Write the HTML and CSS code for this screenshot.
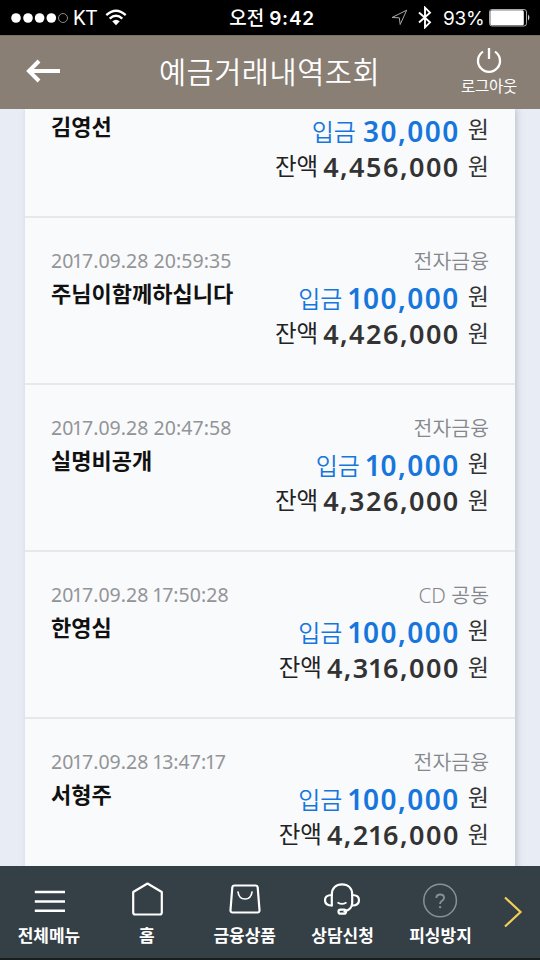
FILE: index.html
```
<!DOCTYPE html>
<html lang="ko">
<head>
<meta charset="utf-8">
<title>예금거래내역조회</title>
<link rel="stylesheet" href="styles.css">
</head>
<body>
<div class="status">
  <div class="carrier">
    <svg width="58" height="12" viewBox="0 0 58 12"><g fill="#fff"><circle cx="5" cy="6" r="4.8"/><circle cx="17" cy="6" r="4.8"/><circle cx="28.6" cy="6" r="4.8"/><circle cx="40.3" cy="6" r="4.8"/></g><circle cx="52" cy="6" r="4.5" fill="none" stroke="#aaa" stroke-width=".8"/></svg>
    <span class="kt">KT</span>
    <svg class="wifi" width="22" height="17" viewBox="0 0 22 17"><g fill="none" stroke="#fff" stroke-width="2.4"><path d="M1.3 6.2Q11-2.600 20.700 6.200"/><path d="M4.700 9.700Q11 4 17.300 9.700"/></g><path d="M7.200 12.300Q11 9 14.800 12.300L11 16.200Z" fill="#fff"/></svg>
  </div>
  <div class="clock"><span>오전</span> <b>9:42</b></div>
  <div class="power">
    <svg width="17" height="17" viewBox="0 0 17 17"><path d="M1 8.500L15.700 1.200L9.200 15.500L8.300 8.800Z" fill="none" stroke="#aaa" stroke-width="1"/></svg>
    <svg class="bt" width="14" height="23" viewBox="0 0 14 23"><path d="M1 6.500L12 16.300L7 21.300V1.700L12 6.700L1 16.500" fill="none" stroke="#fff" stroke-width="1.900"/></svg>
    <span class="percent">93%</span>
    <svg width="42" height="18" viewBox="0 0 42 18"><rect x=".5" y=".5" width="37" height="16.500" rx="2.500" fill="none" stroke="#aaa"/><rect x="1.300" y="1.300" width="33.500" height="15" rx="1.500" fill="#fff"/><path d="M39.200 5.500Q41.500 8.500 39.200 11.700Z" fill="#fff"/></svg>
  </div>
</div>
<header class="header">
  <svg class="back" width="35" height="24" viewBox="0 0 35 24"><path d="M34 12H3M13 2L3 12L13 22" fill="none" stroke="#fff" stroke-width="4"/></svg>
  <h1>예금거래내역조회</h1>
  <div class="logout">
    <svg width="26" height="26" viewBox="0 0 26 26"><path d="M7 4.600A11 11 0 1 0 19 4.600M13 1V12" fill="none" stroke="#fff" stroke-width="2.300"/></svg>
    <span>로그아웃</span>
  </div>
</header>
<main class="main">
  <div class="list">
    <section class="row first">
      <div class="who"><div class="name">김영선</div></div>
      <div class="money">
        <div class="amt in"><span class="label">입금</span><span class="num">30,000</span><span class="won">원</span></div>
        <div class="amt"><span class="label">잔액</span><span class="num">4,456,000</span><span class="won">원</span></div></div>
    </section>
    <section class="row">
      <div class="who"><div class="date">20<i>1</i>7.09.28 20:59:35</div><div class="name">주님이함께하십니다</div></div>
      <div class="money"><div class="type">전자금융</div>
        <div class="amt in"><span class="label">입금</span><span class="num"><i>1</i>00,000</span><span class="won">원</span></div>
        <div class="amt"><span class="label">잔액</span><span class="num">4,426,000</span><span class="won">원</span></div></div>
    </section>
    <section class="row">
      <div class="who"><div class="date">20<i>1</i>7.09.28 20:47:58</div><div class="name">실명비공개</div></div>
      <div class="money"><div class="type">전자금융</div>
        <div class="amt in"><span class="label">입금</span><span class="num"><i>1</i>0,000</span><span class="won">원</span></div>
        <div class="amt"><span class="label">잔액</span><span class="num">4,326,000</span><span class="won">원</span></div></div>
    </section>
    <section class="row">
      <div class="who"><div class="date">20<i>1</i>7.09.28 <i>1</i>7:50:28</div><div class="name">한영심</div></div>
      <div class="money"><div class="type">CD 공동</div>
        <div class="amt in"><span class="label">입금</span><span class="num"><i>1</i>00,000</span><span class="won">원</span></div>
        <div class="amt"><span class="label">잔액</span><span class="num">4,3<i>1</i>6,000</span><span class="won">원</span></div></div>
    </section>
    <section class="row">
      <div class="who"><div class="date">20<i>1</i>7.09.28 <i>1</i>3:47:<i>1</i>7</div><div class="name">서형주</div></div>
      <div class="money"><div class="type">전자금융</div>
        <div class="amt in"><span class="label">입금</span><span class="num"><i>1</i>00,000</span><span class="won">원</span></div>
        <div class="amt"><span class="label">잔액</span><span class="num">4,2<i>1</i>6,000</span><span class="won">원</span></div></div>
    </section>
  </div>
</main>
<nav class="tabs">
  <div class="tab"><svg width="38" height="38" viewBox="0 0 38 38"><path d="M4.800 11H35M4.800 20.500H35M4.800 29.700H35" stroke="#fff" stroke-width="2.400"/></svg><span>전체메뉴</span></div>
  <div class="tab"><svg width="38" height="38" viewBox="0 0 38 38"><path d="M19.500 2.500L33.800 11V31.500Q33.800 33.500 31.800 33.500H7.200Q5.200 33.500 5.200 31.500V11Z" fill="none" stroke="#fff" stroke-width="2.200" stroke-linejoin="round"/></svg><span>홈</span></div>
  <div class="tab"><svg width="38" height="38" viewBox="0 0 38 38"><g fill="none" stroke="#fff" stroke-linecap="round"><path d="M8.500 4.500H29.500Q31.500 4.500 31.700 6.500L33.500 29Q33.700 31.500 31.300 31.500H6.700Q4.300 31.500 4.500 29L6.300 6.500Q6.500 4.500 8.500 4.500Z" stroke-width="2.200"/><path d="M12 11Q13 18 19 18T26 11" stroke-width="1.700"/></g></svg><span>금융상품</span></div>
  <div class="tab"><svg width="38" height="38" viewBox="0 0 38 38"><g fill="none" stroke="#fff" stroke-width="2.200" stroke-linecap="round" transform="translate(-1)"><path d="M8.800 24.500V13.500C8.800 7 13 3.300 19 3.300S29.200 7 29.200 13.500V22Q29 28.500 21.500 30.500"/><path d="M8.800 14Q2 14 2 19.200T8.800 24.500M29.200 14Q36 14 36 19.200T29.200 24.500"/><path d="M15 21.800Q19 24 23 21.800" stroke-width="1.600"/><rect x="15.500" y="28.700" width="7.500" height="4" rx="2"/></g></svg><span>상담신청</span></div>
  <div class="tab"><svg width="38" height="38" viewBox="0 0 38 38"><g transform="translate(-1 -.5)"><g fill="none" stroke="#899096"><circle cx="19.100" cy="20" r="16.300" stroke-width="1.500"/><path d="M15.300 17.500Q15.500 14 19.200 14T23 17.200Q23 19 21 20.200T19.100 23.500" stroke-width="1.900"/></g><circle cx="19.100" cy="26.600" r="1.200" fill="#899096"/></g></svg><span>피싱방지</span></div>
  <svg class="more" width="20" height="32" viewBox="0 0 20 32"><path d="M2 1.500L17.500 16L2 30.500" fill="none" stroke="#f2cf55" stroke-width="2.200"/></svg>
</nav>
</body>
</html>
```
FILE: styles.css
```
* { box-sizing: border-box; }
body {
  margin: 0;
  width: 540px;
  height: 960px;
  overflow: hidden;
  display: flex;
  flex-direction: column;
  background: #e8ecf5;
  font-family: "Noto Sans", "Noto Sans CJK KR", sans-serif;
}
svg { display: block; flex: none; }
i { font-style: normal; margin: 0 -0.07em; }

.status {
  height: 35px;
  flex: none;
  background: #000;
  color: #fff;
  display: grid;
  grid-template-columns: 1fr 100px 1fr;
  align-items: center;
  font-family: Inter, "Noto Sans CJK KR", sans-serif;
  font-size: 19px;
  line-height: 35px;
}
.carrier { display: flex; align-items: center; padding-left: 11px; }
.kt { width: 35px; padding-left: 4px; font-family: Roboto, sans-serif; font-size: 20px; position: relative; top: 1px; }
.wifi { margin-left: 1px; }
.clock { white-space: nowrap; text-align: center; font-weight: 500; padding: 2px 0 0 4px; line-height: 33px; }
.clock b { font-weight: 600; letter-spacing: 0.7px; }
.power { display: flex; align-items: center; justify-content: flex-end; padding-right: 9px; }
.bt { margin-left: 10px; }
.percent { width: 41px; margin: 0 5px 0 11px; white-space: nowrap; letter-spacing: -0.3px; line-height: 33px; padding-top: 2px; }

.header {
  height: 74px;
  flex: none;
  background: #8a7f75;
  color: #fff;
  display: grid;
  grid-template-columns: 132px 1fr 102px;
  align-items: center;
  border-top: 1px solid #777068;
}
.back { margin: -3px 0 0 26px; }
h1 {
  margin: 0;
  font: 350 29.500px/69px "Noto Sans CJK KR", sans-serif;
  text-align: center;
  letter-spacing: 0.500px;
  white-space: nowrap;
  padding: 0 31px 4px 0;
}
.logout { display: flex; flex-direction: column; align-items: center; margin-top: -2px; }
.logout span { font: 400 15.500px/24px "Noto Sans CJK KR", sans-serif; letter-spacing: -0.2px; }

.main { flex: 1; min-height: 0; overflow: hidden; padding: 0 25px; }
.list { width: 490px; background: #f9fafc; box-shadow: 2px 0 6px rgba(70, 80, 100, .25); }
.row {
  height: 167px;
  border-bottom: 2px solid #e6e8eb;
  padding: 30px 26px 0;
  display: flex;
  justify-content: space-between;
}
.first { height: 109px; padding-top: 0; }
.first .name { margin-top: -2px; }
.first .money { margin-top: 4px; }
.date { font-size: 19.500px; line-height: 26px; color: #939497; white-space: nowrap; font-weight: 400; letter-spacing: 0.050px; }
.name { font: 700 22px/36px "Noto Sans CJK KR", sans-serif; color: #111; white-space: nowrap; }
.money { text-align: right; }
.type { font: 350 20.500px/26px "Noto Sans", "Noto Sans CJK KR", sans-serif; color: #86878b; margin-bottom: 6px; }
.amt { display: flex; justify-content: flex-end; height: 36px; line-height: 36px; color: #333; white-space: nowrap; }
.label, .won { font-family: "Noto Sans CJK KR", sans-serif; font-size: 23.500px; line-height: 33px; }
.won { font-size: 23px; line-height: 32px; }
.label { color: #222; }
.num { font-size: 27px; font-weight: 600; letter-spacing: 1.500px; margin: 0 8px 0 5px; }
.in .label { line-height: 36px; font-weight: 350; font-size: 24px; }
.in .won { line-height: 30px; }
.in .num { font-size: 28px; letter-spacing: 1.500px; margin-left: 7px; }
.in .label, .in .num { color: #1676dc; }

.tabs {
  height: 94px;
  flex: none;
  background: #353f46;
  border-bottom: 2px solid #181d20;
  display: grid;
  grid-template-columns: repeat(5, 97.900px) 1fr;
  color: #fff;
}
.tab { display: flex; flex-direction: column; align-items: center; padding-top: 15px; }
.tab span { font: 700 17px/26px "Noto Sans CJK KR", sans-serif; margin-top: 3px; white-space: nowrap; }
.more { margin: 30px 0 0 14px; }
```
